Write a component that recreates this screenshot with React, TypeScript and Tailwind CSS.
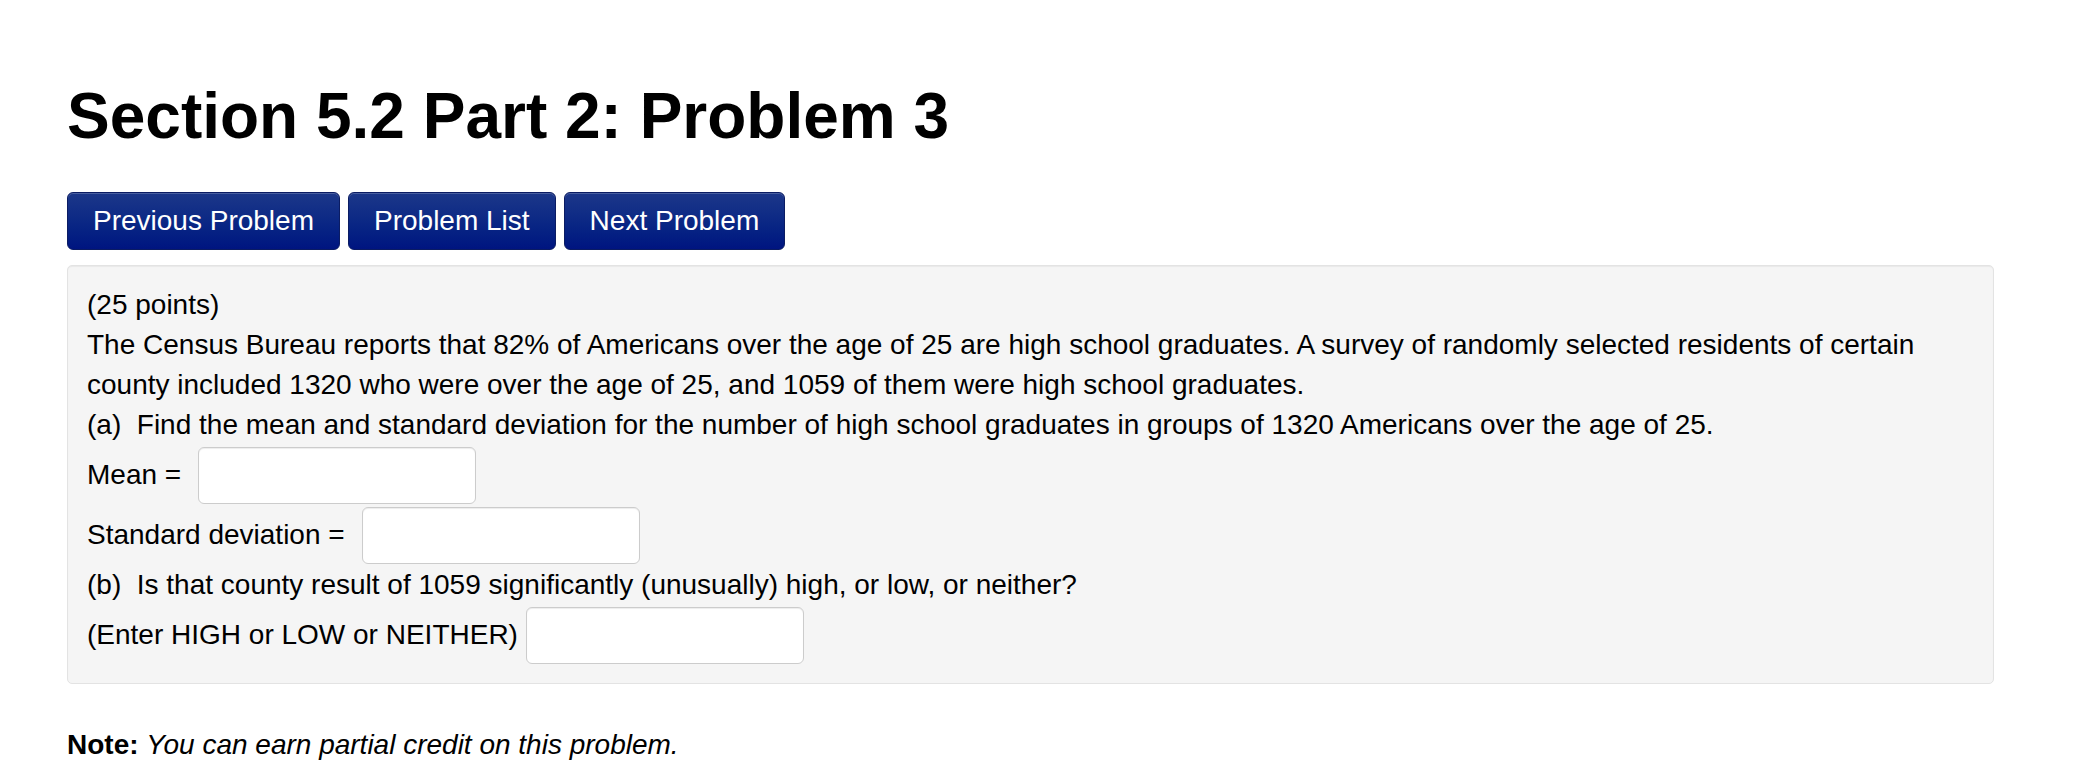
export default function App() {
  const buttons = ["Previous Problem", "Problem List", "Next Problem"];

  return (
    <div className="min-h-screen bg-white px-[67px] pt-[80px] text-black font-['Liberation_Sans',Arial,sans-serif]">
      <h1 className="text-[64px] leading-[72px] font-bold">
        Section 5.2 Part 2: Problem 3
      </h1>

      {/* Nav buttons */}
      <div className="mt-[40px] flex gap-[8px]">
        {buttons.map((label) => (
          <button
            key={label}
            className="rounded-[6px] border border-[#0b1c63] bg-gradient-to-b from-[#1c3789] to-[#001480] px-[25px] py-[8px] text-[28px] leading-[40px] text-white shadow-[inset_0_1px_0_rgba(255,255,255,0.2)]"
          >
            {label}
          </button>
        ))}
      </div>

      {/* Problem body */}
      <div className="mt-[15px] w-[1927px] rounded-[5px] border border-[#e3e3e3] bg-[#f5f5f5] px-[19px] pt-[19px] pb-[18px] text-[28px] leading-[40px] shadow-[inset_0_1px_1px_rgba(0,0,0,0.05)]">
        <div>(25 points)</div>
        <div>
          The Census Bureau reports that 82% of Americans over the age of 25
          are high school graduates. A survey of randomly selected residents of
          certain county included 1320 who were over the age of 25, and 1059 of
          them were high school graduates.
        </div>
        <div>
          (a)&nbsp; Find the mean and standard deviation for the number of high
          school graduates in groups of 1320 Americans over the age of 25.
        </div>
        <div className="flex h-[60px] items-center">
          <span>Mean =</span>
          <input className="ml-[17px] h-[57px] w-[278px] rounded-[6px] border border-[#cccccc] bg-white shadow-[inset_0_1px_1px_rgba(0,0,0,0.075)] outline-none" />
        </div>
        <div className="flex h-[60px] items-center">
          <span>Standard deviation =</span>
          <input className="ml-[17px] h-[57px] w-[278px] rounded-[6px] border border-[#cccccc] bg-white shadow-[inset_0_1px_1px_rgba(0,0,0,0.075)] outline-none" />
        </div>
        <div>
          (b)&nbsp; Is that county result of 1059 significantly (unusually)
          high, or low, or neither?
        </div>
        <div className="flex h-[60px] items-center">
          <span>(Enter HIGH or LOW or NEITHER)</span>
          <input className="ml-[8px] h-[57px] w-[278px] rounded-[6px] border border-[#cccccc] bg-white shadow-[inset_0_1px_1px_rgba(0,0,0,0.075)] outline-none" />
        </div>
      </div>

      <p className="mt-[41px] text-[28px] leading-[40px]">
        <b>Note:</b> <i>You can earn partial credit on this problem.</i>
      </p>
    </div>
  );
}
